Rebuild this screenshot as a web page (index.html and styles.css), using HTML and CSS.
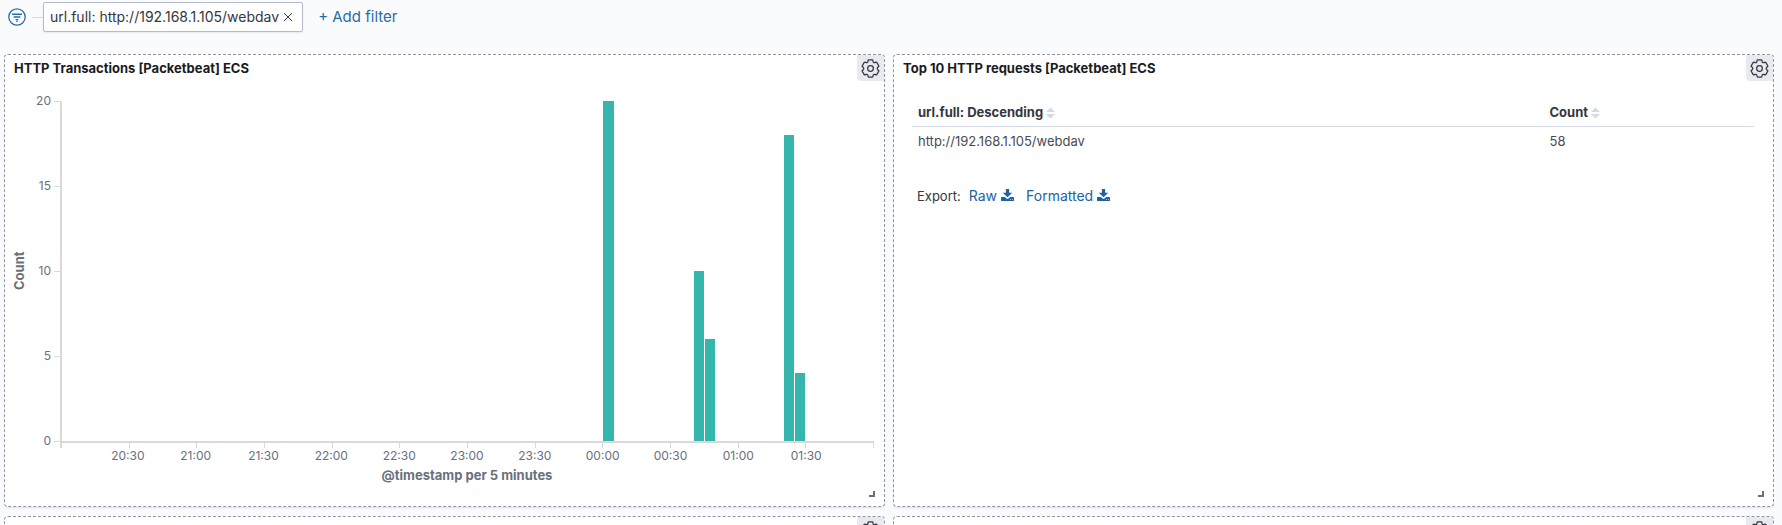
FILE: index.html
```
<!DOCTYPE html>
<html lang="en">
<head>
<meta charset="utf-8">
<title>HTTP Dashboard [Packetbeat] ECS</title>
<link rel="stylesheet" href="styles.css">
</head>
<body>
<svg class="symbols" aria-hidden="true">
  <symbol id="gear" viewBox="0 0 24 24">
    <path d="M9.6 1.2H14.4Q15 1.2 15.1 1.9L15.2 3Q15.5 5.2 17.6 4.5L18.8 4Q19.5 3.7 19.9 4.3L22.4 8.5Q22.8 9.2 22.2 9.6L21.2 10.4Q19.6 12 21.2 13.6L22.2 14.4Q22.8 14.8 22.4 15.5L19.9 19.7Q19.5 20.3 18.8 20L17.6 19.5Q15.5 18.8 15.2 21L15.1 22.1Q15 22.8 14.4 22.8H9.6Q9 22.8 8.9 22.1L8.8 21Q8.5 18.8 6.4 19.5L5.2 20Q4.5 20.3 4.1 19.7L1.6 15.5Q1.2 14.8 1.8 14.4L2.8 13.6Q4.4 12 2.8 10.4L1.8 9.6Q1.2 9.2 1.6 8.5L4.1 4.3Q4.5 3.7 5.2 4L6.4 4.5Q8.5 5.2 8.8 3L8.9 1.9Q9 1.2 9.6 1.2Z" fill="none" stroke="currentColor" stroke-width="1.6" stroke-linejoin="round"/>
    <circle cx="12" cy="12" r="3.6" fill="none" stroke="currentColor" stroke-width="1.6"/>
  </symbol>
  <symbol id="download" viewBox="0 0 13 12">
    <path fill="currentColor" d="M4.9 0H8.1V3.8H11.2L6.5 8.2L1.8 3.8H4.9ZM0.4 8H3.8L5.4 9.4Q6.5 10.1 7.6 9.4L9.2 8H12.6Q13 8 13 8.4V11.6Q13 12 12.6 12H0.4Q0 12 0 11.6V8.4Q0 8 0.4 8ZM9 10.2V11H9.8V10.2ZM11 10.2V11H11.8V10.2Z" fill-rule="evenodd"/>
  </symbol>
  <symbol id="sort" viewBox="0 0 9 12">
    <path fill="currentColor" d="M4.5 0.5L9 5H0ZM0 7H9L4.5 11.5Z"/>
  </symbol>
</svg>

<header class="filters">
  <button class="filters__menu" type="button" aria-label="Change all filters">
    <svg viewBox="0 0 18 18" fill="none" stroke="currentColor"><circle cx="9" cy="9" r="8.2" stroke-width="1.3"/><path d="M4 6.3H14M5.7 9H12.3M7.6 11.6H10.4" stroke-width="1.4"/><path d="M8.2 13.4H9.8" stroke-width="1.2"/></svg>
  </button>
  <span class="filters__branch"></span>
  <div class="pill">
    <span class="pill__label">url.full: http://192.168.1.105/webdav</span>
    <button class="pill__remove" type="button" aria-label="Delete filter"><svg viewBox="0 0 10 10" fill="none" stroke="currentColor" stroke-width="1"><path d="M1 1L9 9M9 1L1 9"/></svg></button>
  </div>
  <button class="filters__add" type="button">+ Add filter</button>
</header>

<main class="dashboard">
  <section class="panel">
    <header class="panel__head">
      <h2 class="panel__title">HTTP Transactions [Packetbeat] ECS</h2>
      <button class="panel__gear" type="button" aria-label="Panel options"><svg><use href="#gear"/></svg></button>
    </header>
    <div class="chart">
      <div class="chart__ytitle">Count</div>
      <ol class="chart__yaxis"><li>20</li><li>15</li><li>10</li><li>5</li><li>0</li></ol>
      <div class="chart__plot">
        <i class="bar bar--0000" style="height:100%"></i>
        <i class="bar bar--0040" style="height:50%"></i>
        <i class="bar bar--0045" style="height:30%"></i>
        <i class="bar bar--0120" style="height:90%"></i>
        <i class="bar bar--0125" style="height:20%"></i>
      </div>
      <div class="chart__ticks"><i></i><i></i><i></i><i></i><i></i><i></i><i></i><i></i><i></i><i></i><i></i><i></i></div>
      <ol class="chart__xaxis"><li>20:30</li><li>21:00</li><li>21:30</li><li>22:00</li><li>22:30</li><li>23:00</li><li>23:30</li><li>00:00</li><li>00:30</li><li>01:00</li><li>01:30</li></ol>
      <div class="chart__xtitle">@timestamp per 5 minutes</div>
    </div>
    <span class="panel__resize"></span>
  </section>

  <section class="panel">
    <header class="panel__head">
      <h2 class="panel__title">Top 10 HTTP requests [Packetbeat] ECS</h2>
      <button class="panel__gear" type="button" aria-label="Panel options"><svg><use href="#gear"/></svg></button>
    </header>
    <div class="listing">
      <table class="table">
        <thead><tr>
          <th class="table__key" scope="col">url.full: Descending<svg class="sort"><use href="#sort"/></svg></th>
          <th scope="col">Count<svg class="sort"><use href="#sort"/></svg></th>
        </tr></thead>
        <tbody><tr><td>http://192.168.1.105/webdav</td><td>58</td></tr></tbody>
      </table>
      <div class="export">
        <span class="export__label">Export:</span>
        <a class="export__link" href="#raw">Raw <svg><use href="#download"/></svg></a>
        <a class="export__link" href="#formatted">Formatted <svg><use href="#download"/></svg></a>
      </div>
    </div>
    <span class="panel__resize"></span>
  </section>

  <section class="panel">
    <header class="panel__head"><button class="panel__gear" type="button" aria-label="Panel options"><svg><use href="#gear"/></svg></button></header>
  </section>
  <section class="panel">
    <header class="panel__head"><button class="panel__gear" type="button" aria-label="Panel options"><svg><use href="#gear"/></svg></button></header>
  </section>
</main>
</body>
</html>
```
FILE: styles.css
```
* { box-sizing: border-box; }
html, body { height: 100%; }
body {
  margin: 0;
  overflow: hidden;
  background: #fafbfd;
  color: #343741;
  font-family: Inter, "Liberation Sans", sans-serif;
  font-size: 13px;
  line-height: 20px;
}
button { padding: 0; border: 0; background: none; color: inherit; font: inherit; cursor: pointer; }
svg { display: block; }
ol { margin: 0; padding: 0; list-style: none; }
.symbols { position: absolute; width: 0; height: 0; }

.filters { display: flex; align-items: center; padding: 2px 8px 0; }
.filters__menu { color: #2a6da8; }
.filters__menu svg { width: 18px; height: 18px; }
.filters__branch { width: 11px; height: 1px; margin-left: 6px; background: #d3dae6; }
.pill {
  display: flex;
  align-items: center;
  height: 30px;
  padding: 0 9px 0 6px;
  border: 1px solid #b4bccb;
  border-radius: 2px;
  background: #fff;
  box-shadow: 0 1px 2px rgba(152, 162, 179, 0.2);
}
.pill__label { font-size: 14px; }
.pill__remove { margin-left: 4px; }
.pill__remove svg { width: 10px; height: 10px; }
.filters__add { margin-left: 15px; color: #2a6da8; font-size: 15px; }

.dashboard {
  display: grid;
  grid-template-columns: 1fr 1fr;
  gap: 9px 8px;
  padding: 22px 8px 0 4px;
}
.panel {
  position: relative;
  min-height: 60px;
  border: 1px dashed #8f95a5;
  border-radius: 4px;
  background: #fff;
  box-shadow: 0 2px 2px -1px rgba(152, 162, 179, 0.3);
}
.panel__head { display: flex; justify-content: flex-end; height: 26px; }
.panel__title {
  flex: 1;
  margin: 0;
  padding: 3px 9px;
  color: #1a1c21;
  font-size: 13px;
  font-weight: 700;
}
.panel__gear {
  display: grid;
  place-items: center;
  width: 27px;
  border-radius: 0 3px 0 4px;
  background: #e9eaef;
}
.panel__gear svg { width: 19px; height: 19px; }
.panel__resize {
  position: absolute;
  right: 9px;
  bottom: 9px;
  width: 6px;
  height: 6px;
  border: solid #69707d;
  border-width: 0 2px 2px 0;
}

.chart {
  display: grid;
  grid-template-columns: 18px 31px 1fr;
  grid-template-rows: 340px 7px auto auto;
  padding: 20px 10px 23px 6px;
  color: #69707d;
  font-size: 12px;
  line-height: 16px;
}
.chart__ytitle {
  writing-mode: vertical-rl;
  transform: rotate(180deg);
  text-align: center;
  font-size: 13px;
  font-weight: 700;
}
.chart__yaxis {
  display: flex;
  flex-direction: column;
  justify-content: space-between;
  margin: -8px 0;
}
.chart__yaxis li { display: flex; align-items: center; justify-content: flex-end; gap: 3px; }
.chart__yaxis li::after { content: ""; width: 6px; height: 1px; background: #d9d9d9; }
.chart__plot {
  display: grid;
  grid-template-columns: repeat(72, 1fr);
  align-items: end;
  border-left: 2px solid #d9d9d9;
}
.bar { margin-right: 1px; background: #34b6ad; }
.bar--0000 { grid-area: 1 / 49; }
.bar--0040 { grid-area: 1 / 57; }
.bar--0045 { grid-area: 1 / 58; }
.bar--0120 { grid-area: 1 / 65; }
.bar--0125 { grid-area: 1 / 66; }
.chart__ticks { grid-column: 3; display: flex; border-top: 2px solid #d9d9d9; }
.chart__ticks i { flex: 1; height: 5px; border-left: 1px solid #d9d9d9; }
.chart__ticks i:first-child { border-left-width: 2px; }
.chart__ticks i:last-child { border-right: 1px solid #d9d9d9; }
.chart__xaxis { grid-column: 3; display: grid; grid-template-columns: repeat(24, 1fr); }
.chart__xaxis li { grid-column-end: span 2; text-align: center; }
.chart__xaxis li:first-child { grid-column-start: 2; }
.chart__xtitle { grid-column: 3; margin-top: 3px; text-align: center; font-size: 13px; font-weight: 700; }

.listing { padding: 17px 19px 0 18px; }
.table { width: 100%; border-collapse: collapse; }
.table__key { width: 75%; }
.table th, .table td { padding: 4px 6px; text-align: left; }
.table th { border-bottom: 1px solid #d3dae6; font-weight: 700; }
.table td { color: #484b54; }
.sort { display: inline-block; width: 9px; height: 12px; margin-left: 3px; vertical-align: -2px; color: #d3dae6; }
.export { display: flex; align-items: baseline; gap: 12px; margin-top: 31px; padding-left: 5px; }
.export__label { margin-right: -4px; }
.export__link { display: flex; align-items: center; gap: 4px; color: #1d63a3; font-size: 14px; text-decoration: none; }
.export__link svg { width: 13px; height: 12px; margin-bottom: 2px; }
```
